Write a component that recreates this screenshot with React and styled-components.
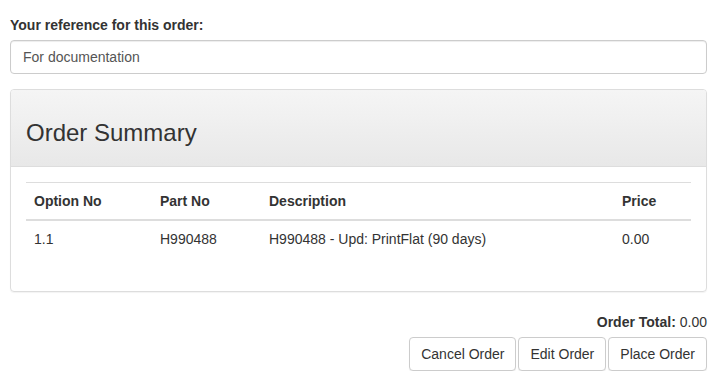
import React from 'react';
import styled, { createGlobalStyle } from 'styled-components';

const GlobalStyle = createGlobalStyle`
  * { box-sizing: border-box; }
  body {
    margin: 0;
    background: #fff;
    font-family: "Liberation Sans", Arial, sans-serif;
    font-size: 14px;
    line-height: 20px;
    color: #333;
  }
`;

const Page = styled.div`
  padding: 15px 13px 0 10px;
`;

const Label = styled.label`
  display: block;
  font-weight: bold;
  margin-bottom: 5px;
`;

const Input = styled.input`
  display: block;
  width: 100%;
  height: 34px;
  padding: 6px 12px;
  font: inherit;
  color: #555;
  border: 1px solid #ccc;
  border-radius: 4px;
  box-shadow: inset 0 1px 1px rgba(0, 0, 0, 0.075);
  margin-bottom: 15px;
  outline: none;
`;

const Panel = styled.div`
  border: 1px solid #ddd;
  border-radius: 4px;
  box-shadow: 0 1px 1px rgba(0, 0, 0, 0.05);
  margin-bottom: 20px;
  overflow: hidden;
`;

const PanelHeading = styled.div`
  padding: 10px 15px;
  background: linear-gradient(to bottom, #f5f5f5 0%, #e8e8e8 100%);
  border-bottom: 1px solid #ddd;
`;

const Title = styled.h3`
  margin: 20px 0 10px;
  font-size: 24px;
  font-weight: 500;
  line-height: 1.1;
`;

const PanelBody = styled.div`
  padding: 15px;
`;

const Table = styled.table`
  width: 100%;
  border-collapse: collapse;
  margin-bottom: 19px;
`;

const Th = styled.th`
  text-align: left;
  padding: 8px;
  border-top: 1px solid #ddd;
  border-bottom: 2px solid #ddd;
  width: ${({ $w }) => $w || 'auto'};
`;

const Td = styled.td`
  padding: 8px;
`;

const Total = styled.div`
  text-align: right;
`;

const Actions = styled.div`
  display: flex;
  justify-content: flex-end;
  gap: 2px;
  margin-top: 5px;
`;

const Button = styled.button`
  height: 34px;
  padding: 6px 11px;
  font: inherit;
  color: #333;
  background: #fff;
  border: 1px solid #ccc;
  border-radius: 4px;
  box-shadow: 0 1px 1px rgba(0, 0, 0, 0.06);
`;

export default function App() {
  return (
    <Page>
      <GlobalStyle />
      <Label>Your reference for this order:</Label>
      <Input defaultValue="For documentation" />
      <Panel>
        <PanelHeading>
          <Title>Order Summary</Title>
        </PanelHeading>
        <PanelBody>
          <Table>
            <thead>
              <tr>
                <Th $w="126px">Option No</Th>
                <Th $w="109px">Part No</Th>
                <Th>Description</Th>
                <Th $w="77px">Price</Th>
              </tr>
            </thead>
            <tbody>
              <tr>
                <Td>1.1</Td>
                <Td>H990488</Td>
                <Td>H990488 - Upd: PrintFlat (90 days)</Td>
                <Td>0.00</Td>
              </tr>
            </tbody>
          </Table>
        </PanelBody>
      </Panel>
      <Total>
        <b>Order Total:</b> 0.00
      </Total>
      <Actions>
        <Button>Cancel Order</Button>
        <Button>Edit Order</Button>
        <Button>Place Order</Button>
      </Actions>
    </Page>
  );
}
